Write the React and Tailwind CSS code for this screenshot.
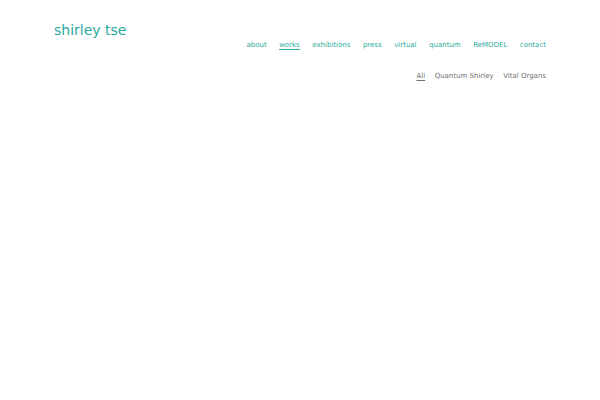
export default function App() {
  const nav = ["about", "works", "exhibitions", "press", "virtual", "quantum", "ReMODEL", "contact"];
  const filters = ["All", "Quantum Shirley", "Vital Organs"];

  return (
    <div className="min-h-[400px] bg-white px-[54px] font-['DejaVu_Sans',sans-serif]">
      {/* header */}
      <div className="flex items-start justify-between pt-[20px]">
        <a className="text-[14px] leading-[20px] text-[#2aa99b]">shirley tse</a>
        <nav className="mt-[19px] flex gap-[12.5px] text-[7px] leading-[12px] text-[#2aa99b]">
          {nav.map((item) => (
            <a
              key={item}
              className={item === "works" ? "underline underline-offset-2 decoration-[#2aa99b]" : ""}
            >
              {item}
            </a>
          ))}
        </nav>
      </div>

      {/* filters */}
      <div className="mt-[19px] flex justify-end gap-[9.5px] text-[7px] leading-[12px] text-[#707070]">
        {filters.map((f) => (
          <span key={f} className={f === "All" ? "underline underline-offset-2" : ""}>
            {f}
          </span>
        ))}
      </div>
    </div>
  );
}
